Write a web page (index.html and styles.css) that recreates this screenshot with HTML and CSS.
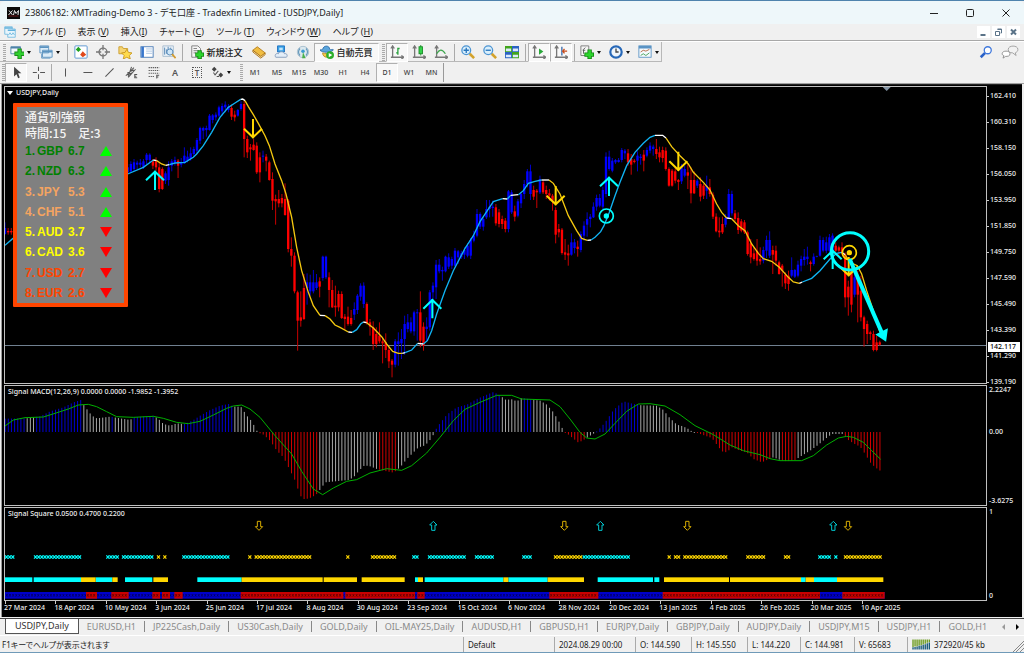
FILE: index.html
```html
<!DOCTYPE html>
<html lang="ja">
<head>
    <meta charset="UTF-8">
    <meta name="viewport" content="width=device-width, initial-scale=1.0">
    <title>23806182: XMTrading-Demo 3 - デモ口座 - Tradexfin Limited - [USDJPY,Daily]</title>
    <link rel="stylesheet" href="styles.css">
</head>
<body>
    <div class="window">
        <header class="titlebar">
            <svg class="logo" viewBox="0 0 26 24"><rect width="26" height="24" fill="#0a0a0a"/><path d="M4 7l7 9M11 7l-8 9M13 16l2-9 3 6 5-6-1 9" fill="none" stroke="#e8e8e8" stroke-width="2"/><path d="M3 18h20" stroke="#c22" stroke-width="1"/></svg>
            <h1>23806182: XMTrading-Demo 3 - デモ口座 - Tradexfin Limited - [USDJPY,Daily]</h1>
            <div class="controls">
                <button type="button" aria-label="最小化"><svg viewBox="0 0 10 10"><path d="M1 5.5h8"/></svg></button>
                <button type="button" aria-label="最大化"><svg viewBox="0 0 10 10"><rect x="1.5" y="1.5" width="7" height="7" rx="1"/></svg></button>
                <button type="button" aria-label="閉じる"><svg viewBox="0 0 10 10"><path d="M1.5 1.5l7 7M8.5 1.5l-7 7"/></svg></button>
            </div>
        </header>

        <nav class="menubar">
            <svg class="doc-icon" viewBox="0 0 16 16"><path d="M1 1h10v3h4v11H5v-4H1z" fill="#e8f5fc" stroke="#62b1dc"/><path d="M1 2.5h10M5 5.5h10" stroke="#62b1dc" stroke-width="2"/><path d="M6 12l2-3 2 3 2-3 2 3" fill="none" stroke="#62b1dc"/></svg>
            <button type="button">ファイル (<u>F</u>)</button>
            <button type="button">表示 (<u>V</u>)</button>
            <button type="button">挿入(<u>I</u>)</button>
            <button type="button">チャート (<u>C</u>)</button>
            <button type="button">ツール (<u>T</u>)</button>
            <button type="button">ウィンドウ (<u>W</u>)</button>
            <button type="button">ヘルプ (<u>H</u>)</button>
            <div class="mdi">
                <button type="button" aria-label="チャートを最小化"><svg viewBox="0 0 12 12"><path d="M3 9h5" stroke-width="2"/></svg></button>
                <button type="button" aria-label="元に戻す"><svg viewBox="0 0 12 12"><path d="M5 3h4v4H8M3 5.500h4v4H3zM5 3.500h4"/></svg></button>
                <button type="button" aria-label="チャートを閉じる"><svg viewBox="0 0 12 12"><path d="M3.500 3.500l5 5M8.500 3.500l-5 5" stroke-width="2"/></svg></button>
            </div>
        </nav>

        <div class="toolbars">
            <div class="toolbar main-tools">
                <span class="grip"></span>
                <button type="button" class="tool drop" aria-label="新規チャート"><svg viewBox="0 0 16 16"><path d="M1 2h11v8H1z" fill="#f2f8fc" stroke="#4e83a8"/><path d="M1 3h11" stroke="#4e83a8" stroke-width="2"/><path d="M11 4v12M5 10h11" stroke="#1c8a1c" stroke-width="5"/><path d="M11 5v10M6 10h10" stroke="#2fd02f" stroke-width="3"/></svg></button>
                <button type="button" class="tool drop" aria-label="表示パターン"><svg viewBox="0 0 16 16"><path d="M1 1h10v8H1zM4 6h11v8H4z" fill="#dcecf8" stroke="#5b93c0"/><path d="M1 2.500h10M4 7.500h11" stroke="#5b93c0" stroke-width="2"/><path d="M3 10v5h10" fill="none" stroke="#5b93c0"/></svg></button>
                <span class="sep"></span>
                <button type="button" class="tool" aria-label="気配値表示"><svg viewBox="0 0 16 16"><rect x="1" y="1" width="14" height="14" rx="1" fill="#fff" stroke="#4f8fd0"/><path d="M5 2l3 3-3 3-3-3z" fill="#1fa21f"/><path d="M10 7l4 4-4 3-3-3z" fill="#e0481c"/></svg></button>
                <button type="button" class="tool" aria-label="データウィンドウ"><svg viewBox="0 0 16 16"><circle cx="8" cy="8" r="4.500" fill="none" stroke="#777" stroke-width="1.500"/><path d="M8 0v6M8 10v6M0 8h6M10 8h6" stroke="#777" stroke-width="1.500"/></svg></button>
                <button type="button" class="tool" aria-label="ナビゲーター"><svg viewBox="0 0 16 16"><path d="M1 2h4l1 2h5v6H1z" fill="#f6d574" stroke="#c89a2a"/><path d="M10 5l2 3.500 4 .5-3 3 1 4-4-2-4 2 1-4-3-3 4-.5z" fill="#ffdb4d" stroke="#c8961c"/></svg></button>
                <button type="button" class="tool" aria-label="ターミナル"><svg viewBox="0 0 16 16"><rect x="1" y="2" width="14" height="12" fill="#fff" stroke="#4478b4"/><path d="M3 2v12" stroke="#3977cc" stroke-width="3"/><path d="M7 4.500h7M7 7h7M7 9.500h7" stroke="#a7c2e0"/></svg></button>
                <button type="button" class="tool" aria-label="ストラテジーテスター"><svg viewBox="0 0 16 16"><path d="M1 1h12v12H1z" fill="#e9f1f8" stroke="#a5bacd"/><path d="M3 3v8M5 5v5M7 2v5M10 3v3" stroke="#4d7fae"/><circle cx="9" cy="8" r="3.500" fill="#cfe6f7" stroke="#4b82b5"/><path d="M11.500 10.500l4 4.500" stroke="#d39b2e" stroke-width="2"/></svg></button>
                <span class="sep"></span>
                <button type="button" class="tool labelled new-order"><svg viewBox="0 0 16 16"><path d="M2 1h7l3 3v10H2z" fill="#f5f5f5" stroke="#777"/><path d="M4 4h4M4 6.500h6M4 9h3" stroke="#777"/><path d="M11 6v10M6 11h10" stroke="#118711" stroke-width="5"/><path d="M11 7v8M7 11h8" stroke="#2cd42c" stroke-width="3"/></svg>新規注文</button>
                <button type="button" class="tool" aria-label="メタエディター"><svg viewBox="0 0 16 16"><path d="M1 6l5-4 9 7-5 5z" fill="#f0bd42" stroke="#b47a14"/><path d="M1 6v2l9 7 5-4V9l-5 4z" fill="#f9e6b4" stroke="#a66c10"/></svg></button>
                <button type="button" class="tool" aria-label="クラウド"><svg viewBox="0 0 16 16"><path d="M4 1h8v7H4z" fill="#38a0e4" stroke="#1d6fc0"/><path d="M6 3h4v3H6z" fill="#bfe4fb"/><path d="M2 14c-2-3 1-5 3-4 1-3 6-3 7 0 3-1 4 3 2 4z" fill="#e4eef8" stroke="#8098b8"/></svg></button>
                <button type="button" class="tool" aria-label="シグナル"><svg viewBox="0 0 16 16"><circle cx="8" cy="8" r="6.500" fill="#dbe8ee" stroke="#a3bccb"/><path d="M4.500 4a6 6 0 0 0 0 8M11.500 4a6 6 0 0 1 0 8" fill="none" stroke="#6598bb" stroke-width="1.500"/><circle cx="8" cy="7" r="2" fill="#3b9bd2"/><path d="M8 8l3 7H7z" fill="#48b048"/></svg></button>
                <button type="button" class="tool labelled auto-trade pressed"><svg viewBox="0 0 16 16"><path d="M0 6c3 3 11 3 15 0 1-2-3 0-4-1 0-5-7-5-8 0-1 1-4 0-3 1z" fill="#5aa5dc" stroke="#2e6da8"/><path d="M3 9c0 6 8 7 9 0-2 1-7 1-9 0z" fill="#f4c84a" stroke="#b98a20"/><circle cx="11.500" cy="11.500" r="4.500" fill="#2cae2c"/><path d="M10 9l4 2.500-4 2.500z" fill="#fff"/></svg>自動売買</button>
                <span class="grip"></span>
                <button type="button" class="tool pressed" aria-label="バーチャート"><svg viewBox="0 0 16 16"><path class="axis" d="M3 2v12h12M1 4l2-3 2 3M13 12l3 2-3 2M1 14h2"/><path d="M9 3v8M9 4h2M7 9h2" stroke="#28a03c" stroke-width="1.500"/></svg></button>
                <button type="button" class="tool" aria-label="ローソク足"><svg viewBox="0 0 16 16"><path class="axis" d="M3 2v12h12M1 4l2-3 2 3M13 12l3 2-3 2M1 14h2"/><path d="M10 0v12" stroke="#168a24"/><rect x="8" y="2" width="4" height="8" fill="#32d24a" stroke="#168a24"/></svg></button>
                <button type="button" class="tool" aria-label="ラインチャート"><svg viewBox="0 0 16 16"><path class="axis" d="M3 2v12h12M1 4l2-3 2 3M13 12l3 2-3 2M1 14h2"/><path d="M3 10c3-5 6-6 10 0" fill="none" stroke="#3ca54c" stroke-width="1.500"/></svg></button>
                <span class="sep"></span>
                <button type="button" class="tool" aria-label="ズームイン"><svg viewBox="0 0 16 16"><path d="M10 10l5 5" stroke="#d3a22c" stroke-width="3"/><circle cx="6" cy="6" r="5" fill="#d9effc" stroke="#4c94d2" stroke-width="1.500"/><path d="M6 3v6M3 6h6" stroke="#2876bd" stroke-width="1.500"/></svg></button>
                <button type="button" class="tool" aria-label="ズームアウト"><svg viewBox="0 0 16 16"><path d="M10 10l5 5" stroke="#d3a22c" stroke-width="3"/><circle cx="6" cy="6" r="5" fill="#d9effc" stroke="#4c94d2" stroke-width="1.500"/><path d="M3 6h6" stroke="#2876bd" stroke-width="1.500"/></svg></button>
                <button type="button" class="tool" aria-label="整列"><svg viewBox="0 0 16 16"><path d="M0 1h8v7H0zM8 8h8v7H8z" fill="#42a41c"/><path d="M8 1h8v7H8zM0 8h8v7H0z" fill="#2a62c4"/><path d="M1 4h6v3H1zM9 4h6v3H9zM1 11h6v3H1zM9 11h6v3H9z" fill="#dceafa"/></svg></button>
                <span class="sep"></span>
                <button type="button" class="tool pressed" aria-label="オートスクロール"><svg viewBox="0 0 16 16"><path class="axis" d="M3 2v12h12M1 4l2-3 2 3M13 12l3 2-3 2M1 14h2"/><path d="M8 4v7l5-3.500z" fill="#2aa83a"/></svg></button>
                <button type="button" class="tool pressed" aria-label="チャートシフト"><svg viewBox="0 0 16 16"><path class="axis" d="M3 2v12h12M1 4l2-3 2 3M13 12l3 2-3 2M1 14h2"/><path d="M9 2v10" stroke="#3668a8" stroke-width="1.500"/><path d="M10 7h5M12 4.500L10 7l2 2.500" fill="none" stroke="#c84a18" stroke-width="1.500"/></svg></button>
                <span class="sep"></span>
                <button type="button" class="tool drop" aria-label="インディケーター"><svg viewBox="0 0 16 16"><path d="M1 1h9v11H1z" fill="#f5f5f5" stroke="#777"/><path d="M4 10V5l2-2M3 6h3" fill="none" stroke="#555"/><path d="M11 5v11M5 11h11" stroke="#118711" stroke-width="5"/><path d="M11 6v9M6 11h9" stroke="#2cd42c" stroke-width="3"/></svg></button>
                <button type="button" class="tool drop" aria-label="時間足"><svg viewBox="0 0 16 16"><circle cx="8" cy="8" r="6.500" fill="#eef5fc" stroke="#2768b8" stroke-width="2.500"/><path d="M8 4v4h3" fill="none" stroke="#444" stroke-width="1.500"/></svg></button>
                <button type="button" class="tool drop" aria-label="定型チャート"><svg viewBox="0 0 16 16"><rect x="1" y="1" width="14" height="13" fill="#f5fafd" stroke="#5a93c4"/><path d="M1 2.500h14" stroke="#5a93c4" stroke-width="3"/><path d="M3 8l3-2 3 1 4-2" fill="none" stroke="#b0603c"/><path d="M3 12l3-2 3 2 4-3" fill="none" stroke="#3c9a50"/></svg></button>
                <div class="right-tools">
                    <button type="button" class="tool" aria-label="検索"><svg viewBox="0 0 16 16"><path d="M7 9l-5 5" stroke="#2b62c8" stroke-width="3"/><circle cx="10" cy="6" r="4" fill="#fff" stroke="#3f78dc" stroke-width="1.500"/></svg></button>
                    <button type="button" class="tool chat" aria-label="チャット"><svg viewBox="0 0 20 16"><path d="M8 5c0-5 11-5 11 0 0 2-1 3-3 4l1 3-4-3c-3 0-5-1-5-4z" fill="#f2f2f2" stroke="#999"/><path d="M1 10c0-4 9-4 9 0 0 3-3 3-5 3l-3 2 1-3c-1 0-2-1-2-2z" fill="#fff" stroke="#888"/></svg></button>
                </div>
            </div>

            <div class="toolbar line-tools">
                <span class="grip small"></span>
                <button type="button" class="tool pressed" aria-label="カーソル"><svg viewBox="0 0 16 16"><path d="M5 1v12l3-3 2 5 2-1-2-5h4z" fill="#444"/></svg></button>
                <button type="button" class="tool" aria-label="クロスヘア"><svg viewBox="0 0 16 16"><path class="ink" d="M8 1v5M8 10v6M1 8h5M10 8h6"/></svg></button>
                <span class="sep"></span>
                <button type="button" class="tool" aria-label="垂直線"><svg viewBox="0 0 16 16"><path class="ink" d="M8 3v10"/></svg></button>
                <button type="button" class="tool" aria-label="水平線"><svg viewBox="0 0 16 16"><path class="ink" d="M3 8h11"/></svg></button>
                <button type="button" class="tool" aria-label="トレンドライン"><svg viewBox="0 0 16 16"><path class="ink" d="M3 13L13 3"/></svg></button>
                <button type="button" class="tool" aria-label="チャネル"><svg viewBox="0 0 16 16"><path class="ink" d="M1 12L11 2M4 14l9-10M3 8l8-3M2 11l8-3M8 1L4 13"/><path class="ink" d="M15 10.500h-3v4h3M12 12.500h2"/></svg></button>
                <button type="button" class="tool" aria-label="フィボナッチ"><svg viewBox="0 0 16 16"><path class="ink" d="M2 2h13M2 5.500h13M2 9h13M2 13h7" stroke-dasharray="1.500 1"/><path class="ink" d="M12 15.500v-4h3M12 13.500h2"/></svg></button>
                <button type="button" class="tool letter">A</button>
                <button type="button" class="tool letter boxed"><span>T</span></button>
                <button type="button" class="tool drop" aria-label="矢印"><svg viewBox="0 0 16 16"><path d="M4 1l3 3-3 3-3-3zM12 8l3 3-3 3-3-3z" fill="#444"/><path class="ink" d="M3 8l2 3 4-5M7 13h3" stroke-width="2"/></svg></button>
                <span class="grip"></span>
                <button type="button" class="tool period">M1</button>
                <button type="button" class="tool period">M5</button>
                <button type="button" class="tool period">M15</button>
                <button type="button" class="tool period">M30</button>
                <button type="button" class="tool period">H1</button>
                <button type="button" class="tool period">H4</button>
                <button type="button" class="tool period pressed">D1</button>
                <button type="button" class="tool period">W1</button>
                <button type="button" class="tool period">MN</button>
            </div>
        </div>

        <main class="charts">
            <section class="pane price">
                <div class="plot">
                    <svg id="priceChart" viewBox="15 9 2943 888" preserveAspectRatio="none"></svg>
                    <div class="caption"><i></i>USDJPY,Daily</div>
                    <div class="strength">
                        <p>通貨別強弱</p>
                        <p>時間:15　足:3</p>
                        <ol>
                            <li class="green"><span>1.</span><span>GBP</span><span>6.7</span><i class="up"></i></li>
                            <li class="green"><span>2.</span><span>NZD</span><span>6.3</span><i class="up"></i></li>
                            <li class="sand"><span>3.</span><span>JPY</span><span>5.3</span><i class="up"></i></li>
                            <li class="sand"><span>4.</span><span>CHF</span><span>5.1</span><i class="up"></i></li>
                            <li class="yellow"><span>5.</span><span>AUD</span><span>3.7</span><i class="down"></i></li>
                            <li class="yellow"><span>6.</span><span>CAD</span><span>3.6</span><i class="down"></i></li>
                            <li class="orange"><span>7.</span><span>USD</span><span>2.7</span><i class="down"></i></li>
                            <li class="orange"><span>8.</span><span>EUR</span><span>2.6</span><i class="down"></i></li>
                        </ol>
                    </div>
                </div>
                <div class="scale ticks">
                    <span>162.410</span><span>160.310</span><span>158.150</span><span>156.050</span>
                    <span>153.950</span><span>151.850</span><span>149.750</span><span>147.590</span>
                    <span>145.490</span><span>143.390</span><span>141.290</span><span>139.190</span>
                    <b class="current">142.117</b>
                </div>
            </section>

            <section class="pane macd">
                <div class="plot">
                    <svg id="macdChart" viewBox="15 6 2943 357" preserveAspectRatio="none"></svg>
                    <div class="caption">Signal MACD(12,26,9) 0.0000 0.0000 -1.9852 -1.3952</div>
                </div>
                <div class="scale">
                    <span>2.2247</span><span class="zero">0.00</span><span>-3.6275</span>
                </div>
            </section>

            <section class="pane square">
                <div class="plot">
                    <svg id="squareChart" viewBox="15 372 2943 276" preserveAspectRatio="none"></svg>
                    <div class="caption">Signal Square 0.0500 0.4700 0.2200</div>
                </div>
                <div class="scale">
                    <span>1</span><span>0</span>
                </div>
            </section>

            <div class="dates">
                <span>27 Mar 2024</span><span>18 Apr 2024</span><span>10 May 2024</span><span>3 Jun 2024</span>
                <span>25 Jun 2024</span><span>17 Jul 2024</span><span>8 Aug 2024</span><span>30 Aug 2024</span>
                <span>23 Sep 2024</span><span>15 Oct 2024</span><span>6 Nov 2024</span><span>28 Nov 2024</span>
                <span>20 Dec 2024</span><span>13 Jan 2025</span><span>4 Feb 2025</span><span>26 Feb 2025</span>
                <span>20 Mar 2025</span><span>10 Apr 2025</span>
            </div>
        </main>

        <div class="tabs">
            <div class="tab-list">
                <button type="button" class="active">USDJPY,Daily</button>
                <button type="button">EURUSD,H1</button>
                <button type="button">JP225Cash,Daily</button>
                <button type="button">US30Cash,Daily</button>
                <button type="button">GOLD,Daily</button>
                <button type="button">OIL-MAY25,Daily</button>
                <button type="button">AUDUSD,H1</button>
                <button type="button">GBPUSD,H1</button>
                <button type="button">EURJPY,Daily</button>
                <button type="button">GBPJPY,Daily</button>
                <button type="button">AUDJPY,Daily</button>
                <button type="button">USDJPY,M15</button>
                <button type="button">USDJPY,H1</button>
                <button type="button">GOLD,H1</button>
            </div>
            <button type="button" class="scroll prev" aria-label="前へ"></button>
            <button type="button" class="scroll next" aria-label="次へ"></button>
        </div>

        <footer class="status">
            <span>F1キーでヘルプが表示されます</span>
            <span>Default</span>
            <span>2024.08.29 00:00</span>
            <span>O: 144.590</span>
            <span>H: 145.550</span>
            <span>L: 144.220</span>
            <span>C: 144.981</span>
            <span>V: 65683</span>
            <span class="traffic">
                <svg viewBox="0 0 56 32"><path d="M3 1v22M9 1v21M15 1v20M21 1v18M27 1v17M33 1v15M39 1v13M45 1v10M51 1v8" stroke="#6a9a1c" stroke-width="4"/><path d="M3 24v7M9 23v8M15 22v9M21 20v11M27 19v12M33 17v14M39 15v16M45 12v19M51 10v21" stroke="#135678" stroke-width="4"/></svg>
                372920/45 kb
            </span>
            <svg class="resize" viewBox="0 0 12 12"><path d="M1 12L12 1M4 12l8-8M8 12l4-4" stroke="#888"/></svg>
        </footer>
    </div>
    <script src="charts.js"></script>
</body>
</html>
```
FILE: styles.css
```css
* {
    box-sizing: border-box;
}
body {
    margin: 0;
    background-color: #4f83ad;
    font-family: "Noto Sans", "Noto Sans CJK JP", sans-serif;
    font-feature-settings: "palt";
    color: #222;
}
button {
    font: inherit;
    color: inherit;
    background: none;
    border: none;
    padding: 0;
    margin: 0;
    white-space: nowrap;
}
p, h1, ol {
    margin: 0;
    padding: 0;
}
svg {
    display: block;
    fill: none;
}
.window {
    display: flex;
    flex-direction: column;
    height: 100vh;
    min-height: 500px;
    border-top: 1px solid #4f83ad;
    border-bottom: 1px solid #6f9ab8;
    background-color: #f0f0f0;
    overflow: hidden;
}

/* title and menu */
.titlebar {
    display: flex;
    align-items: center;
    height: 23px;
    flex: none;
    padding-left: 7px;
    background-color: #eef7fa;
    border-radius: 5px 5px 0 0;
}
.titlebar h1 {
    flex: 1;
    margin-left: 5px;
    font-size: 9px;
    line-height: 14px;
    font-weight: normal;
    white-space: nowrap;
}
.logo {
    width: 13px;
    height: 12px;
}
.controls {
    display: flex;
}
.controls button {
    width: 36px;
    height: 22px;
    display: grid;
    place-items: center;
}
.controls svg {
    width: 10px;
    height: 10px;
    stroke: #222;
}
.menubar {
    display: flex;
    align-items: center;
    height: 16px;
    flex: none;
    padding: 0 4px;
    font-size: 9px;
    line-height: 14px;
}
.menubar > button {
    margin-right: 12px;
}
.doc-icon {
    width: 12px;
    height: 12px;
    margin-right: 6px;
}
.mdi {
    display: flex;
    gap: 2px;
    margin-left: auto;
}
.mdi button {
    background-color: #fff;
}
.mdi svg {
    width: 13px;
    height: 12px;
    stroke: #5a7388;
}

/* toolbars */
.toolbars {
    flex: none;
    border-top: 1px solid #a8a8a8;
    border-bottom: 1px solid #a0a0a0;
}
.toolbar {
    display: flex;
    align-items: center;
    height: 21px;
}
.main-tools {
    border-top: 1px solid #fff;
    background:
        linear-gradient(#b8b8b8, #b8b8b8) left bottom / 662px 1px no-repeat,
        linear-gradient(#b8b8b8, #b8b8b8) 661px 0 / 1px 100% no-repeat;
}
.grip {
    width: 7px;
    height: 17px;
    flex: none;
    background: repeating-linear-gradient(#aaa 0 1px, #f0f0f0 1px 2px) 3px 0 / 3px 100% no-repeat;
}
.grip.small {
    width: 5px;
    background-position-x: 2px;
}
.sep {
    width: 5px;
    height: 17px;
    flex: none;
    background: linear-gradient(#aaa, #aaa) center / 1px 100% no-repeat;
}
.tool {
    width: 22px;
    height: 19px;
    flex: none;
    display: flex;
    align-items: center;
    justify-content: center;
}
.tool svg {
    width: 14px;
    height: 14px;
    flex: none;
}
.line-tools .tool svg {
    width: 13px;
    height: 13px;
}
.tool.pressed {
    background: #f8f8f8;
    border: 1px solid #fff;
    border-top-color: #b0b0b0;
    border-left-color: #b0b0b0;
}
.tool.drop {
    width: 29px;
    justify-content: flex-start;
    padding-left: 3px;
    gap: 3px;
}
.tool.drop::after {
    content: "";
    border: 2px solid transparent;
    border-top: 3px solid #111;
    border-bottom: none;
}
.tool.labelled {
    gap: 2px;
    font-size: 9px;
    font-weight: 500;
}
.new-order {
    width: 63px;
}
.auto-trade {
    width: 65px;
}
.tool .axis {
    stroke: #777;
    stroke-width: 1.5;
}
.tool .ink {
    stroke: #555;
    stroke-width: 1.25;
}
.right-tools {
    display: flex;
    gap: 2px;
    margin-left: auto;
    padding-right: 3px;
}
.tool.chat svg {
    width: 18px;
}
.letter {
    font-size: 9px;
    font-weight: 600;
    color: #555;
}
.boxed span {
    border: 1px dotted #555;
    width: 10px;
    line-height: 9px;
    font-size: 8px;
}
.period {
    font-size: 7px;
    font-weight: 500;
    color: #444;
}
.period:last-child {
    width: 24px;
    border-right: 1px solid #999;
}

/* charts */
.charts {
    flex: 1;
    min-height: 0;
    display: grid;
    grid-template-rows: 298fr 121fr 94fr 15px;
    row-gap: 1px;
    margin: 0 2px 0 1px;
    padding: 2px 1px 0 2px;
    background-color: #000;
    border-left: 1px solid #999;
    box-shadow: inset 0 1px #222;
    font-size: 7px;
    font-weight: 500;
    line-height: 10px;
    color: #f0f0f0;
}
.pane {
    display: grid;
    grid-template-columns: 1fr 34px;
    min-height: 0;
}
.plot {
    position: relative;
    min-height: 0;
    border: 1px solid #c0c0c0;
}
.plot > svg {
    position: absolute;
    inset: 0;
    width: 100%;
    height: 100%;
}
.caption {
    position: absolute;
    left: 3px;
    top: 1px;
    white-space: nowrap;
}
.price .caption {
    left: 2px;
}
.caption i {
    display: inline-block;
    border: 3px solid transparent;
    border-top: 4px solid #fff;
    border-bottom: none;
    margin-right: 3px;
}
.strength {
    position: absolute;
    left: 8px;
    top: 16px;
    width: 115px;
    height: 204px;
    padding: 2px 8px 0;
    display: flex;
    flex-direction: column;
    background-color: #808080;
    border: 4px solid #ff4500;
    border-radius: 1px;
    color: #f4f4f4;
    font-family: "Liberation Sans", "Noto Sans CJK JP", sans-serif;
    font-size: 12px;
    line-height: 16px;
}
.strength p {
    font-family: "Noto Sans CJK JP", sans-serif;
    font-weight: 500;
    white-space: nowrap;
}
.strength ol {
    flex: 1;
    display: flex;
    flex-direction: column;
    list-style: none;
    font-weight: bold;
}
.strength li {
    flex: 1;
    display: grid;
    grid-template-columns: 12px 31px 32px 12px;
    align-items: center;
}
.strength .green { color: #008000; }
.strength .sand { color: #f4a460; }
.strength .yellow { color: #ffff00; }
.strength .orange { color: #ff4500; }
.strength i {
    border: 6px solid transparent;
}
.strength .up {
    border-top: none;
    border-bottom: 10px solid #00ff00;
}
.strength .down {
    border-bottom: none;
    border-top: 10px solid #ff0000;
}
.scale {
    position: relative;
    display: flex;
    flex-direction: column;
    justify-content: space-between;
    padding-left: 2px;
}
.price .scale {
    margin-bottom: -3px;
    padding-top: 5px;
}
.ticks {
    padding-left: 0;
}
.ticks span {
    padding-left: 3px;
    background: linear-gradient(#ccc, #ccc) left center / 2px 1px no-repeat;
}
.current {
    position: absolute;
    left: 1px;
    right: 1px;
    top: 85%;
    padding-left: 2px;
    background-color: #fff;
    color: #000;
    font-weight: 500;
}
.zero {
    position: absolute;
    top: 35%;
}
.dates {
    display: flex;
    margin-top: -1px;
    padding-right: 34px;
    white-space: nowrap;
}
.dates span {
    flex: 0 0 calc(100% * 16 / 312);
    padding-top: 2px;
    background: linear-gradient(#ccc, #ccc) 1px 0 / 1px 3px no-repeat;
}

/* chart tabs */
.tabs {
    display: flex;
    flex: none;
    height: 17px;
    margin-top: 1px;
    padding-left: 5px;
    border-top: 1px solid #444;
    font-size: 9px;
    line-height: 14px;
    color: #8a8a8a;
}
.tab-list {
    flex: 1;
    min-width: 0;
    display: flex;
    overflow: hidden;
}
.tab-list button {
    flex: none;
    height: 15px;
    padding: 0 9px 0 8px;
    background: linear-gradient(#888, #888) right center / 1px 11px no-repeat;
}
.tab-list .active {
    padding: 0 9px;
    background: #fff;
    color: #333;
    border: 1px solid #555;
    border-top: none;
}
.tab-list button:last-child {
    background: none;
}
.scroll {
    width: 14px;
}
.scroll::before {
    content: "";
    display: inline-block;
    border: 3px solid transparent;
}
.prev::before {
    border-right-color: #999;
    border-left: none;
}
.next::before {
    border-left-color: #000;
    border-right: none;
}

/* status bar */
.status {
    position: relative;
    flex: none;
    display: grid;
    grid-template-columns: 1fr 91px 81px 56px 56px 53px 54px 53px 117px;
    height: 17px;
    border-top: 1px solid #fff;
    padding-top: 1px;
    font-size: 8px;
    line-height: 15px;
    white-space: nowrap;
}
.status > span {
    padding-left: 4px;
    border-left: 1px solid #aaa;
}
.status > span:first-child {
    padding-left: 2px;
    border-left: none;
}
.traffic {
    display: flex;
    align-items: center;
    gap: 3px;
}
.traffic svg {
    width: 19px;
    height: 11px;
}
.resize {
    position: absolute;
    right: 0;
    bottom: 0;
    width: 12px;
    height: 12px;
}
```
FILE: charts.js
```js
// One bar is 9.44 chart units wide, the first one starts at x = 15
const STEP = 9.44;
const START = 15;
const CYAN = '#00ffff';
const GOLD = '#ffd700';

function add(svg, tag, attrs) {
    const el = document.createElementNS('http://www.w3.org/2000/svg', tag);
    for (const key in attrs) el.setAttribute(key, attrs[key]);
    svg.appendChild(el);
}

// colour, high, body top, body bottom, low
const firstCandles = 'b 415 432 450 452,r 432 441 445 452,r 432 441 445 452';
const candles = `b 240 250 265 270,b 232 240 262 265,b 225 235 255 262,b 230 236 242 255,b 225 236 242 250,
b 225 232 250 255,b 207 212 228 240,b 208 212 228 235,r 225 232 245 255,r 220 232 250 260,
r 235 250 315 325,r 250 255 315 318,b 262 268 290 300,b 232 250 288 305,b 225 232 245 262,
b 218 228 236 245,r 225 230 245 282,b 222 234 242 250,b 190 215 238 240,b 200 218 230 235,
b 190 208 225 230,b 188 195 210 215,b 162 168 200 210,b 128 132 170 180,b 128 132 140 165,
b 125 132 138 158,b 90 95 138 140,b 90 94 108 118,b 85 92 100 110,b 65 70 95 100,
b 58 66 82 95,b 52 62 70 85,b 60 68 78 85,r 62 72 98 108,r 80 92 100 112,
b 75 78 95 98,b 52 60 75 80,r 50 60 165 220,r 155 165 205 222,r 180 190 196 230,
r 165 182 198 200,r 175 185 265 270,r 205 220 265 295,b 200 215 218 235,r 210 218 230 262,
r 230 235 288 290,r 265 285 350 378,r 332 345 352 422,r 318 345 358 370,r 330 342 358 370,
r 298 345 393 395,r 345 350 495 505,r 460 495 515 548,r 505 515 622 628,r 620 625 710 800,
r 622 700 710 728,r 570 612 705 708,b 568 595 612 662,b 572 595 622 635,b 558 595 622 628,
b 570 595 612 618,r 580 592 608 640,b 515 518 582 590,b 515 518 580 585,r 565 580 618 670,
r 588 618 670 672,r 605 665 670 698,r 620 630 670 682,r 622 630 702 705,r 690 698 705 738,
r 668 698 720 725,r 678 702 720 725,b 655 675 692 708,b 630 635 678 690,b 598 605 638 650,
b 595 605 660 672,r 655 660 718 722,r 705 715 728 755,r 712 730 780 798,r 730 750 780 790,
r 715 755 772 778,r 760 772 778 838,r 748 775 798 822,r 790 798 832 852,r 825 830 842 880,
b 765 772 842 850,b 745 772 780 845,b 735 765 778 825,b 695 720 765 812,b 690 715 735 745,
b 700 715 742 748,b 680 685 742 755,b 675 685 688 770,r 622 685 770 790,r 715 728 785 800,
b 700 728 735 770,b 618 625 730 740,b 595 605 625 700,b 528 542 610 645,b 525 542 562 568,
b 548 558 562 590,b 515 518 562 565,b 508 520 548 555,b 518 525 545 555,b 492 500 545 548,
b 498 502 520 540,b 500 508 520 525,b 490 498 512 525,b 478 485 515 520,b 462 468 515 525,
b 440 455 470 475,b 375 390 455 460,b 385 390 428 435,b 400 405 428 440,b 348 375 400 405,
b 348 368 375 400,b 350 368 372 398,r 360 370 418 425,r 375 385 420 430,r 395 405 420 435,
r 402 410 435 445,b 318 322 435 445,b 318 325 385 390,r 365 382 398 412,b 345 352 395 400,
b 325 330 358 372,b 288 300 330 345,b 255 262 300 310,b 242 262 330 348,r 305 318 338 348,
r 315 320 325 372,b 275 285 325 330,r 288 295 325 330,r 305 318 330 345,r 315 328 335 350,
r 330 335 350 380,r 370 378 452 478,r 420 435 445 460,r 432 437 507 512,r 465 505 512 528,
r 482 508 514 545,b 448 475 512 515,b 465 475 492 508,r 470 488 495 518,b 442 450 498 505,
b 412 425 455 470,b 385 405 422 458,b 390 398 405 430,b 355 368 400 402,b 332 342 368 380,
b 330 342 365 370,b 308 318 368 375,b 205 218 330 340,b 200 218 255 260,b 222 230 260 265,
b 225 228 235 240,b 222 228 234 236,b 192 198 228 235,b 195 200 208 225,r 195 208 235 245,
r 210 225 242 272,r 225 230 234 238,b 202 215 230 262,b 210 218 222 242,r 198 212 230 262,
b 190 198 215 220,b 175 185 200 208,b 182 188 195 215,r 165 195 210 225,r 188 205 220 235,
r 188 198 222 235,r 190 200 255 260,r 250 255 305 308,r 255 260 305 308,r 252 262 290 298,
r 285 288 294 318,b 240 250 292 300,b 245 255 275 280,r 240 265 275 315,r 250 288 328 358,
r 262 288 328 330,b 285 290 305 312,r 280 300 338 352,r 300 305 335 345,b 275 305 320 345,
r 285 310 330 338,r 325 332 398 405,r 388 398 442 445,r 400 440 445 460,r 398 420 445 450,
b 390 402 422 430,b 315 330 400 405,b 320 330 388 395,r 378 388 405 412,r 385 402 438 450,
r 405 412 440 445,r 408 415 445 450,r 440 445 510 515,r 465 478 520 538,r 490 508 525 530,
r 465 500 530 545,r 490 525 532 542,b 488 498 530 538,b 455 468 500 522,b 442 468 515 522,
r 485 498 512 570,r 485 500 530 545,r 530 535 570 572,r 540 545 560 608,r 565 572 598 615,
r 560 575 600 620,b 520 558 575 580,b 555 558 578 582,b 530 542 575 580,b 515 525 545 562,
b 495 518 528 545,b 488 518 525 542,r 530 535 540 562,b 508 518 540 545,b 515 517 519 520,
b 455 468 515 518,b 460 468 500 505,b 458 475 500 508,b 450 460 500 505,b 448 455 500 515,
r 475 485 500 505,r 485 490 500 515,r 475 490 505 510,r 505 510 640 670,r 590 608 640 695,
r 545 560 662 685,b 570 580 632 640,r 560 575 632 715,r 575 620 700 712,r 695 700 735 788,
r 710 720 750 780,r 740 745 750 768,r 740 750 798 802,r 755 775 798 802,r 770 775 782 785`;

// moving average, coloured by direction
const average = [
    ['b', '15,484 38,464 200,380 383,270 430,250 455,232 460,228'],
    ['w', '460,228 470,230'],
    ['g', '470,230 485,240 497,244'],
    ['w', '497,244 508,242'],
    ['b', '508,242 525,237 555,235 580,220 590,210 610,185 635,145 660,100 685,70 705,57 722,46'],
    ['w', '722,46 728,45 735,50'],
    ['g', '735,50 745,68 760,92 775,118 795,155 808,185 825,240 845,290 858,330 875,400 890,490 905,560 925,625 940,665 960,694'],
    ['w', '960,694 975,695'],
    ['g', '975,695 990,705 1005,723 1020,730 1045,744'],
    ['w', '1045,744 1057,745'],
    ['b', '1057,745 1070,737 1082,720 1090,714'],
    ['w', '1090,714 1100,716'],
    ['g', '1100,716 1120,732 1145,758 1160,780 1178,802 1195,808 1207,808'],
    ['w', '1207,808 1215,806'],
    ['b', '1215,806 1235,798 1253,778'],
    ['w', '1253,778 1270,780'],
    ['b', '1270,780 1282,770 1295,740 1310,690 1335,620 1360,560 1395,493 1420,455 1440,413 1460,383 1480,353 1508,344'],
    ['w', '1508,344 1522,345'],
    ['b', '1522,345 1532,334'],
    ['w', '1532,334 1555,332'],
    ['b', '1555,332 1570,320 1585,298 1605,292 1625,288'],
    ['w', '1625,288 1647,288'],
    ['g', '1647,288 1660,298 1680,330 1705,395 1730,440 1745,463 1762,469'],
    ['w', '1762,469 1773,468'],
    ['b', '1773,468 1785,460 1802,443 1812,425 1828,385 1845,335 1860,295 1880,245 1905,205 1930,178 1950,160 1965,154'],
    ['w', '1965,154 1988,154 1998,162'],
    ['g', '1998,162 2015,188 2040,215 2065,240 2080,265 2110,295 2130,318 2150,360 2165,385 2180,402'],
    ['w', '2180,402 2195,404'],
    ['g', '2195,404 2215,425 2235,440 2255,480 2275,508 2290,524 2315,532 2338,550 2365,580 2380,594 2398,598'],
    ['w', '2398,598 2407,594'],
    ['b', '2407,594 2435,583 2460,560 2490,525 2510,508 2525,505'],
    ['w', '2525,505 2535,512'],
    ['g', '2535,512 2550,535 2572,545 2585,570 2600,620 2620,680 2640,745']
];

function drawCandles(svg, text, first) {
    text.split(',').forEach((item, n) => {
        const [color, high, top, bottom, low] = item.trim().split(' ');
        const x = START + (first + n) * STEP;
        const red = color === 'r';
        add(svg, 'rect', { x: x - 1.5, y: high, width: 3, height: low - high, fill: red ? '#c80000' : '#0000c8' });
        add(svg, 'rect', { x: x - 3.5, y: top, width: 7, height: bottom - top, fill: red ? '#ff0000' : '#0000ff' });
    });
}

// open arrow with the tip at x, y
function drawArrow(svg, x, y, up) {
    const s = up ? 1 : -1;
    add(svg, 'path', {
        d: `M${x} ${y}v${s * 58}M${x - 27} ${y + s * 29}L${x} ${y + s * 3}L${x + 27} ${y + s * 29}`,
        stroke: up ? CYAN : GOLD, 'stroke-width': 6, fill: 'none'
    });
}

function drawPrice() {
    const svg = document.getElementById('priceChart');
    add(svg, 'path', { d: 'M15 784.500H2958', stroke: '#708090', 'stroke-width': 3 });
    drawCandles(svg, firstCandles, 0);
    drawCandles(svg, candles, 39);
    const colors = { b: '#10b4f4', g: '#f4c810', w: '#ffffff' };
    average.forEach(([color, points]) => {
        add(svg, 'polyline', { points, stroke: colors[color], 'stroke-width': 4, fill: 'none' });
    });

    drawArrow(svg, 465, 260, true);
    drawArrow(svg, 759, 163, false);
    drawArrow(svg, 1297, 645, true);
    drawArrow(svg, 1667, 364, false);
    drawArrow(svg, 1827, 278, true);
    drawArrow(svg, 2035, 261, false);
    drawArrow(svg, 2498, 497, true);
    drawArrow(svg, 2546, 577, false);

    add(svg, 'circle', { cx: 1819, cy: 396, r: 21, stroke: CYAN, 'stroke-width': 5 });
    add(svg, 'circle', { cx: 1819, cy: 396, r: 8, fill: CYAN });
    add(svg, 'circle', { cx: 2548, cy: 506, r: 21, stroke: GOLD, 'stroke-width': 5 });
    add(svg, 'circle', { cx: 2548, cy: 506, r: 8, fill: GOLD });
    add(svg, 'circle', { cx: 2550, cy: 502, r: 56, stroke: CYAN, 'stroke-width': 9 });
    add(svg, 'path', { d: 'M2549 525L2648 752', stroke: CYAN, 'stroke-width': 12 });
    add(svg, 'path', { d: 'M2632 752L2660 738L2656 768Z', fill: CYAN, stroke: CYAN, 'stroke-width': 6 });
    add(svg, 'path', { d: 'M2648 9h24l-12 12z', fill: '#8494a4' });
}

const macdTips = [
    15, 104, 78, 103, 120, 97, 150, 82, 190, 70, 220, 55, 242, 48, 252, 65, 262, 78, 275, 95, 290, 103, 330, 98,
    390, 108, 400, 100, 460, 95, 475, 105, 490, 120, 510, 125, 530, 118, 555, 120, 580, 108, 600, 95, 630, 78,
    660, 65, 685, 60, 700, 68, 722, 68, 740, 95, 755, 112, 770, 140, 775, 146, 790, 152, 810, 170, 830, 200,
    850, 220, 870, 260, 885, 290, 895, 320, 905, 343, 915, 346, 935, 340, 950, 330, 965, 310, 975, 295,
    1045, 288, 1060, 280, 1075, 262, 1090, 246, 1105, 245, 1130, 255, 1160, 262, 1180, 266, 1200, 250,
    1220, 225, 1240, 205, 1255, 190, 1270, 186, 1285, 175, 1303, 147, 1310, 130, 1330, 105, 1340, 92, 1370, 70,
    1400, 62, 1430, 45, 1460, 32, 1480, 24, 1495, 32, 1510, 42, 1520, 50, 1530, 44, 1550, 52, 1565, 42, 1585, 45,
    1620, 50, 1640, 62, 1660, 85, 1675, 110, 1690, 140, 1700, 148, 1715, 160, 1735, 176, 1755, 165, 1770, 155,
    1785, 146, 1795, 138, 1815, 115, 1840, 78, 1870, 52, 1900, 60, 1925, 64, 1970, 65, 1990, 78, 2005, 98,
    2030, 122, 2045, 126, 2060, 132, 2075, 142, 2095, 148, 2115, 155, 2135, 162, 2150, 182, 2165, 202, 2180, 205,
    2195, 190, 2220, 200, 2240, 205, 2260, 225, 2285, 235, 2300, 228, 2320, 220, 2340, 228, 2360, 232, 2385, 228,
    2400, 218, 2430, 200, 2455, 182, 2475, 165, 2495, 150, 2530, 150, 2540, 165, 2560, 178, 2580, 188, 2595, 210,
    2610, 235, 2625, 250, 2643, 262
];
// each colour holds up to the given x
const macdColors = [
    [78, 'b'], [104, 'w'], [247, 'b'], [330, 'w'], [342, 'b'], [395, 'w'], [465, 'b'], [548, 'w'], [703, 'b'],
    [772, 'w'], [953, 'r'], [1135, 'w'], [1192, 'r'], [1305, 'w'], [1505, 'b'], [1568, 'w'], [1596, 'b'],
    [1693, 'w'], [1758, 'r'], [1785, 'w'], [1918, 'b'], [2090, 'w'], [2318, 'r'], [2342, 'w'], [2392, 'r'],
    [2533, 'w'], [2700, 'r']
];
const macdSignal = `15,126 40,108 75,101 130,99 165,88 205,75 235,63 265,61 290,68 320,83 350,98 400,100 460,97 490,103
530,115 565,119 600,112 640,93 680,73 700,66 725,63 750,75 780,100 825,155 875,210 905,262 940,315 968,332 1000,312
1020,302 1040,292 1070,287 1110,267 1160,254 1205,259 1235,245 1280,207 1320,160 1360,110 1395,76 1440,55 1490,34
1535,34 1565,45 1650,48 1680,68 1710,105 1740,145 1760,162 1785,165 1815,150 1845,118 1880,82 1915,60 1950,59
1995,66 2040,92 2085,125 2140,152 2190,183 2230,200 2280,212 2310,224 2340,230 2405,230 2440,215 2480,183 2515,162
2540,157 2560,160 2590,175 2615,200 2642,226`;

function tipAt(x) {
    for (let i = 2; i < macdTips.length; i += 2) {
        if (x <= macdTips[i]) {
            const x0 = macdTips[i - 2], y0 = macdTips[i - 1];
            return y0 + (macdTips[i + 1] - y0) * (x - x0) / (macdTips[i] - x0);
        }
    }
    return macdTips[macdTips.length - 1];
}

function drawMacd() {
    const svg = document.getElementById('macdChart');
    const colors = { b: '#0000d0', w: '#a8a8a8', r: '#d00000' };
    for (let i = 0; i < 279; i++) {
        const x = START + i * STEP;
        const y = tipAt(x);
        const color = macdColors.find(item => x < item[0])[1];
        add(svg, 'rect', {
            x: x - 1, y: Math.min(y, 144), width: 3, height: Math.max(Math.abs(y - 144), 3), fill: colors[color]
        });
    }
    add(svg, 'polyline', { points: macdSignal, stroke: '#00b000', 'stroke-width': 3, fill: 'none' });
}

const crosses = {
    [CYAN]: [[15, 47], [102, 245], [319, 358], [366, 463], [547, 689], [1237, 1257], [1284, 1398], [1425, 1483],
        [1567, 1597], [1748, 1890], [2455, 2495], [2503, 2513]],
    [GOLD]: [[471, 482], [490, 500], [745, 755], [764, 936], [1039, 1049], [1113, 1190], [1662, 1748], [2003, 2013],
        [2022, 2041], [2050, 2183], [2239, 2297], [2352, 2372], [2532, 2646]]
};
const trend = {
    [CYAN]: [[15, 97], [101, 243], [287, 337], [375, 457], [592, 725], [1245, 1254], [1274, 1510], [1525, 1643],
        [1793, 1959], [1963, 1978], [2403, 2417], [2442, 2511]],
    [GOLD]: [[243, 287], [337, 353], [460, 504], [725, 968], [971, 1071], [1085, 1214], [1254, 1269], [1510, 1525],
        [1643, 1752], [1992, 2187], [2190, 2403], [2417, 2442], [2511, 2650]]
};
const redSquares = [[258, 291], [334, 386], [457, 480], [486, 510], [523, 548], [722, 1030], [1036, 1245],
    [1252, 1274], [1648, 1795], [1988, 2460], [2527, 2654]];

function drawSquares(svg, from, to, color, dark) {
    add(svg, 'rect', { x: from, y: 624, width: to - from, height: 20, fill: color });
    for (let x = from + 3; x < to - 5; x += STEP) {
        add(svg, 'path', { d: `M${x} 630l5 8m0 -8l-5 8`, stroke: dark, 'stroke-width': 2 });
    }
}

function drawSquare() {
    const svg = document.getElementById('squareChart');
    for (const color in crosses) {
        crosses[color].forEach(([from, to]) => {
            for (let x = from; x < to - 4; x += STEP) {
                add(svg, 'path', { d: `M${x} 514l9 10m0 -10l-9 10`, stroke: color, 'stroke-width': 3.5 });
            }
        });
    }
    for (const color in trend) {
        trend[color].forEach(([from, to]) => {
            add(svg, 'rect', { x: from, y: 580, width: to - from, height: 14, fill: color });
        });
    }
    drawSquares(svg, 15, 2654, '#0000c8', '#000050');
    redSquares.forEach(([from, to]) => drawSquares(svg, from, to, '#c80000', '#500000'));

    [[777, 0], [1300, 1], [1693, 0], [1801, 1], [2062, 0], [2500, 1], [2544, 0]].forEach(([x, up]) => {
        const y = up ? 412 : 439;
        const s = up ? 1 : -1;
        add(svg, 'path', {
            d: `M${x} ${y}l11 ${s * 11}h-6v${s * 16}h-10v${s * -16}h-6z`,
            stroke: up ? '#00c8d0' : '#d8ac00', 'stroke-width': 3, fill: 'none'
        });
    });
}

drawPrice();
drawMacd();
drawSquare();
```
